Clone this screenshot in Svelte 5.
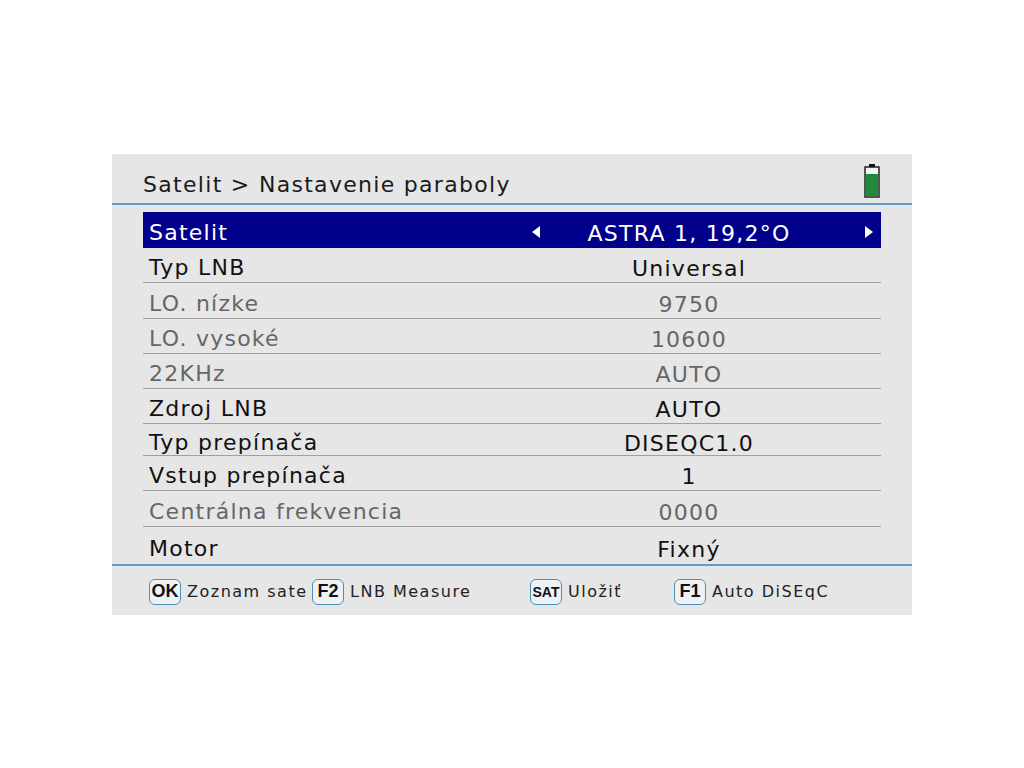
<script>
	const rows = [
		{ label: 'Typ LNB', value: 'Universal', h: 35 },
		{ label: 'LO. nízke', value: '9750', h: 36, off: true },
		{ label: 'LO. vysoké', value: '10600', h: 35, off: true },
		{ label: '22KHz', value: 'AUTO', h: 35, off: true },
		{ label: 'Zdroj LNB', value: 'AUTO', h: 35 },
		{ label: 'Typ prepínača', value: 'DISEQC1.0', h: 32 },
		{ label: 'Vstup prepínača', value: '1', h: 35 },
		{ label: 'Centrálna frekvencia', value: '0000', h: 36, off: true },
		{ label: 'Motor', value: 'Fixný', h: 38, last: true }
	];

	const keys = [
		{ key: 'OK', text: 'Zoznam sate', w: 163 },
		{ key: 'F2', text: 'LNB Measure', w: 218 },
		{ key: 'SAT', text: 'Uložiť', w: 144, small: true },
		{ key: 'F1', text: 'Auto DiSEqC', w: 170 }
	];
</script>

<div class="panel">
	<header>
		<h1>Satelit &gt; Nastavenie paraboly</h1>
		<svg class="battery" width="16" height="34" viewBox="0 0 16 34">
			<rect x="5" y="0" width="6" height="3" fill="#111" />
			<rect x="1" y="3" width="14" height="30" fill="#f2f2f2" stroke="#222" stroke-width="1.5" />
			<rect x="2" y="10" width="12" height="22" fill="#1c8c3a" />
			<path d="M2 15h12M2 21h12M2 27h12" stroke="#3d7d4d" stroke-width="0.7" />
		</svg>
	</header>

	<div class="list">
		<div class="row selected">
			<span class="label">Satelit</span>
			<span class="arrow left"></span>
			<span class="value">ASTRA 1, 19,2°O</span>
			<span class="arrow right"></span>
		</div>
		{#each rows as row}
			<div class="row" class:off={row.off} class:last={row.last} style="height: {row.h}px">
				<span class="label">{row.label}</span>
				<span class="value">{row.value}</span>
			</div>
		{/each}
	</div>

	<footer>
		{#each keys as k}
			<div class="hint" style="width: {k.w}px">
				<span class="key" class:small={k.small}>{k.key}</span>
				<span>{k.text}</span>
			</div>
		{/each}
	</footer>
</div>

<style>
	:global(body) {
		background: #fff;
	}
	.panel {
		width: 800px;
		height: 461px;
		margin: 154px auto 0;
		background: #e6e6e6;
		font-family: "DejaVu Sans", sans-serif;
		color: #111;
		display: flex;
		flex-direction: column;
	}
	header {
		height: 49px;
		padding: 0 31px;
		border-bottom: 2px solid #5f9fd0;
		display: flex;
		justify-content: space-between;
		align-items: center;
		box-sizing: content-box;
	}
	h1 {
		margin: 12px 0 0;
		font-size: 22px;
		font-weight: normal;
		letter-spacing: 1.3px;
		color: #1a1a1a;
	}
	.battery {
		margin: 4px 1px 0 0;
	}
	.list {
		margin: 7px 31px 0;
		display: flex;
		flex-direction: column;
		height: 352px;
	}
	.row {
		position: relative;
		display: flex;
		align-items: center;
		padding-left: 6px;
		border-bottom: 1px solid #a0a0a0;
		font-size: 22px;
		letter-spacing: 1.25px;
		box-sizing: border-box;
		flex: none;
	}
	.row.last {
		border-bottom: none;
	}
	.row.off {
		color: #666;
	}
	.row.selected {
		height: 36px;
		background: #00008b;
		color: #fff;
		border-bottom: none;
	}
	.value {
		position: absolute;
		left: 0;
		right: 0;
		padding-left: 354px;
		width: 384px;
		box-sizing: content-box;
		text-align: center;
		top: 50%;
		transform: translateY(-37%);
	}
	.label {
		margin-top: 5px;
	}
	.arrow {
		position: absolute;
		top: 14px;
		width: 0;
		height: 0;
		border-top: 6px solid transparent;
		border-bottom: 6px solid transparent;
	}
	.arrow.left {
		left: 389px;
		border-right: 8px solid #fff;
	}
	.arrow.right {
		left: 722px;
		border-left: 8px solid #fff;
	}
	footer {
		flex: 1;
		padding: 2px 0 0 37px;
		border-top: 2px solid #5f9fd0;
		display: flex;
		align-items: center;
		font-size: 16px;
		letter-spacing: 1.5px;
		color: #222;
	}
	.hint {
		display: flex;
		align-items: center;
		gap: 6px;
		white-space: nowrap;
		flex: none;
	}
	.key {
		display: inline-flex;
		align-items: center;
		justify-content: center;
		width: 30px;
		height: 24px;
		border: 1.5px solid #4a90b8;
		border-radius: 6px;
		font-family: "Liberation Sans", sans-serif;
		font-weight: bold;
		font-size: 18px;
		letter-spacing: 0;
		color: #111;
		background: #eef2f4;
	}
	.key.small {
		font-size: 14px;
	}
</style>
